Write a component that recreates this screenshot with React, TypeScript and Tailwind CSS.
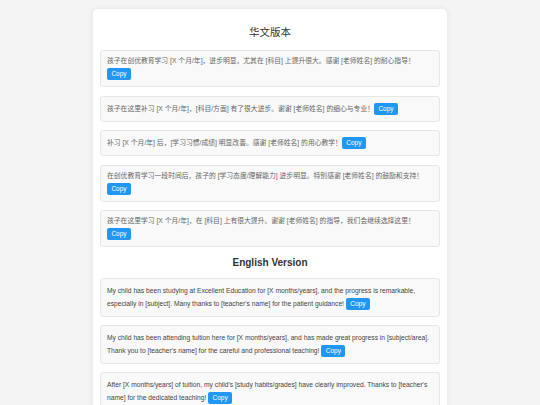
import React from "react";

const zh = [
  "孩子在创优教育学习 [X 个月/年]，进步明显，尤其在 [科目] 上提升很大。感谢 [老师姓名] 的耐心指导！",
  "孩子在这里补习 [X 个月/年]，[科目/方面] 有了很大进步。谢谢 [老师姓名] 的细心与专业！",
  "补习 [X 个月/年] 后，[学习习惯/成绩] 明显改善。感谢 [老师姓名] 的用心教学！",
  "在创优教育学习一段时间后，孩子的 [学习态度/理解能力] 进步明显。特别感谢 [老师姓名] 的鼓励和支持！",
  "孩子在这里学习 [X 个月/年]，在 [科目] 上有很大提升。谢谢 [老师姓名] 的指导，我们会继续选择这里！",
];

const en = [
  "My child has been studying at Excellent Education for [X months/years], and the progress is remarkable, especially in [subject]. Many thanks to [teacher's name] for the patient guidance!",
  "My child has been attending tuition here for [X months/years], and has made great progress in [subject/area]. Thank you to [teacher's name] for the careful and professional teaching!",
  "After [X months/years] of tuition, my child's [study habits/grades] have clearly improved. Thanks to [teacher's name] for the dedicated teaching!",
];

function CopyBtn() {
  return (
    <button className="inline-block align-middle h-[12px] w-[24px] shrink-0 rounded-[2px] bg-[#2196f3] text-white text-[6.5px] leading-[12px] text-center">
      Copy
    </button>
  );
}

export default function App() {
  return (
    <div
      className="min-h-[405px] bg-[#f4f4f4] pt-[9px]"
      style={{ fontFamily: '"Liberation Sans", Arial, "Noto Sans CJK SC", sans-serif' }}
    >
      <div className="mx-auto w-[354px] rounded-[5px] bg-white px-[7px] pb-[10px] shadow-[0_0_6px_rgba(0,0,0,0.08)]">
        <h2 className="pt-[16px] pb-[11px] text-center text-[10.5px] leading-[14px] font-normal text-[#333]">
          华文版本
        </h2>
        <div className="flex flex-col gap-[8.5px]">
          {zh.map((t, i) => (
            <div
              key={i}
              className="flex flex-wrap items-center gap-x-0 gap-y-[3px] rounded-[3px] border border-[#e6e6e6] bg-[#f9f9f9] px-[6px] py-[6px] text-[6.8px] leading-[8px] text-[#666]"
            >
              <span>{t}</span>
              <CopyBtn />
            </div>
          ))}
        </div>
        <h2 className="pt-[9px] pb-[8px] text-center text-[10px] leading-[14px] font-bold text-[#333]">
          English Version
        </h2>
        <div className="flex flex-col gap-[8px]">
          {en.map((t, i) => (
            <div
              key={i}
              className="rounded-[3px] border border-[#e6e6e6] bg-[#f9f9f9] px-[6px] py-[6px] text-[6.7px] leading-[12.5px] text-[#444]"
            >
              {t} <CopyBtn />
            </div>
          ))}
        </div>
      </div>
    </div>
  );
}
